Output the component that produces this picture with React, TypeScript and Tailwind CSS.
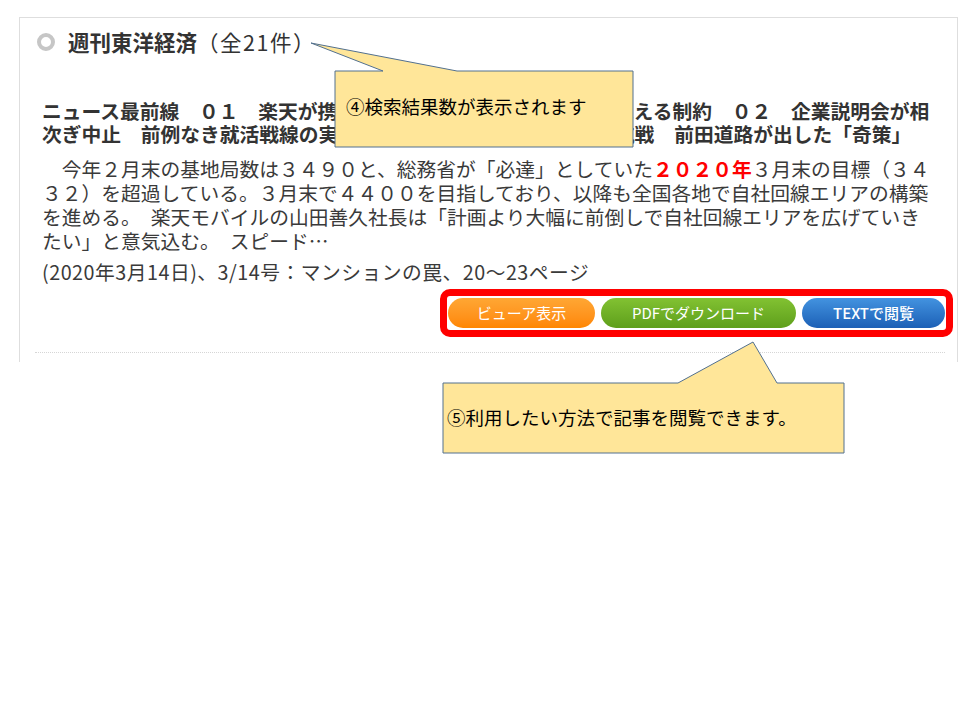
import React from 'react';

const jp = "font-['Noto_Sans_CJK_JP','Noto_Sans',sans-serif]";
const sp = '\u3000';

// callout overlays drawn on top of the page capture
const Callouts: React.FC = () => (
  <div className="pointer-events-none absolute inset-0">
    <svg width="960" height="720" className="absolute left-0 top-0">
      <polygon
        points="335,71 383,71 311,43 457,71 633,71 633,147 335,147"
        fill="#ffe699"
        stroke="#52708f"
        strokeWidth="1"
      />
      <polygon
        points="443,383 678,383 753,342 777,383 844,383 844,453 443,453"
        fill="#ffe699"
        stroke="#52708f"
        strokeWidth="1"
      />
    </svg>
    <div className="absolute left-[335px] top-[71px] flex h-[76px] w-[298px] items-center pl-[11px] pb-[4px] text-[18.5px] text-black">
      ④検索結果数が表示されます
    </div>
    <div className="absolute left-[443px] top-[383px] flex h-[70px] w-[401px] items-center pl-[4px] text-[18.5px] text-black">
      ⑤利用したい方法で記事を閲覧できます。
    </div>
  </div>
);

const App: React.FC = () => {
  return (
    <div className={`relative h-[720px] w-[960px] overflow-hidden bg-white ${jp}`}>
      <div className="pt-[17px] pl-[19px] pr-[2px]">
        <div className="h-[345px] overflow-hidden border-x border-t border-[#dedede] bg-white pl-[22px] pr-[4px]">
          {/* Title */}
          <div className="ml-[-5px] mt-[12px] flex h-[24px] items-center gap-[13px]">
            <span className="h-[18px] w-[18px] rounded-full border-[4px] border-[#c6c6c6] bg-white" />
            <div className="text-[21.5px] leading-[24px] text-[#333]">
              <span className="font-bold">週刊東洋経済</span>
              <span className="tracking-[1.5px]">（全21件）</span>
            </div>
          </div>

          {/* Headline */}
          <p className="mt-[45px] text-[19.75px] font-bold leading-[23px] text-[#333]">
            ニュース最前線{sp}０１{sp}楽天が携帯参入で直面する基地局整備が抱える制約{sp}０２{sp}企業説明会が相
            <br />
            次ぎ中止{sp}前例なき就活戦線の実態{sp}０３{sp}敵対ＴＯＢへの徹底抗戦{sp}前田道路が出した「奇策」
          </p>

          {/* Body */}
          <p className="mt-[12px] text-[19.75px] leading-[24px] text-[#3a3a3a]">
            {sp}今年２月末の基地局数は３４９０と、総務省が「必達」としていた
            <span className="font-bold text-[#f00]">２０２０年</span>
            ３月末の目標（３４
            <br />
            ３２）を超過している。３月末で４４００を目指しており、以降も全国各地で自社回線エリアの構築
            <br />
            を進める。{sp}楽天モバイルの山田善久社長は「計画より大幅に前倒しで自社回線エリアを広げていき
            <br />
            たい」と意気込む。{sp}スピード…
          </p>

          <p className="mt-[7px] text-[19.75px] leading-[24px] tracking-[0.5px] text-[#3a3a3a]">
            (2020年3月14日)、3/14号：マンションの罠、20〜23ページ
          </p>

          {/* Actions */}
          <div className="mt-[5px] flex justify-end">
            <div className="flex h-[48px] items-center gap-[6px] rounded-[10px] border-[7px] border-[#ff0000] bg-white px-[1px]">
              <button className="h-[30px] w-[147px] rounded-full bg-linear-to-b from-[#ffa733] to-[#ff8600] text-[15px] text-white">
                ビューア表示
              </button>
              <button className="h-[30px] w-[195px] rounded-full bg-linear-to-b from-[#82c232] to-[#5e9f1b] text-[15px] text-white">
                PDFでダウンロード
              </button>
              <button className="h-[30px] w-[143px] rounded-full bg-linear-to-b from-[#4393e0] to-[#1c60b6] text-[15px] font-medium text-white">
                TEXTで閲覧
              </button>
            </div>
          </div>

          <div className="ml-[-7px] mr-[8px] mt-[15px] border-t border-dotted border-[#d6d6d6]" />
        </div>
      </div>

      <Callouts />
    </div>
  );
};

export default App;
